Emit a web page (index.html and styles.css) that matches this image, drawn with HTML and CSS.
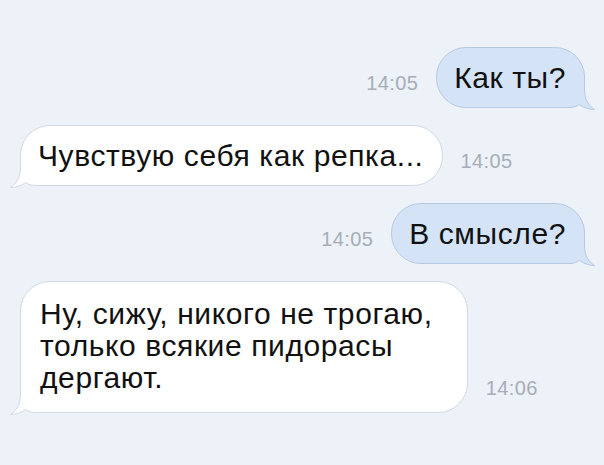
FILE: index.html
```html
<!DOCTYPE html>
<html lang="ru">
<head>
    <meta charset="UTF-8">
    <title>Переписка</title>
    <link rel="stylesheet" href="styles.css">
</head>
<body>
    <div class="chat">
        <div class="row out">
            <span class="time">14:05</span>
            <div class="bubble"><span class="text">Как ты?</span>
                <svg class="tail" width="44" height="36" viewBox="0 0 44 36"><path class="tail-fill" d="M10.5 0H44V33.5H26C22 33.5 18.5 32.5 15.5 30.5C11.5 33.5 6 35.5 0.5 35.5C6 32 10.5 26 10.5 16Z"/><path class="tail-line" d="M10.5 0V16C10.5 26 6 32 0.5 35.5C6 35.5 11.5 33.5 15.5 30.5C18.5 32.5 22 33.5 26 33.5H44"/></svg>
            </div>
        </div>

        <div class="row in">
            <div class="bubble"><span class="text">Чувствую себя как репка...</span>
                <svg class="tail" width="44" height="36" viewBox="0 0 44 36"><path class="tail-fill" d="M10.5 0H44V33.5H26C22 33.5 18.5 32.5 15.5 30.5C11.5 33.5 6 35.5 0.5 35.5C6 32 10.5 26 10.5 16Z"/><path class="tail-line" d="M10.5 0V16C10.5 26 6 32 0.5 35.5C6 35.5 11.5 33.5 15.5 30.5C18.5 32.5 22 33.5 26 33.5H44"/></svg>
            </div>
            <span class="time">14:05</span>
        </div>

        <div class="row out">
            <span class="time">14:05</span>
            <div class="bubble"><span class="text">В смысле?</span>
                <svg class="tail" width="44" height="36" viewBox="0 0 44 36"><path class="tail-fill" d="M10.5 0H44V33.5H26C22 33.5 18.5 32.5 15.5 30.5C11.5 33.5 6 35.5 0.5 35.5C6 32 10.5 26 10.5 16Z"/><path class="tail-line" d="M10.5 0V16C10.5 26 6 32 0.5 35.5C6 35.5 11.5 33.5 15.5 30.5C18.5 32.5 22 33.5 26 33.5H44"/></svg>
            </div>
        </div>

        <div class="row in">
            <div class="bubble long"><span class="text">Ну, сижу, никого не трогаю,<br>только всякие пидорасы<br>дергают.</span>
                <svg class="tail" width="44" height="36" viewBox="0 0 44 36"><path class="tail-fill" d="M10.5 0H44V33.5H26C22 33.5 18.5 32.5 15.5 30.5C11.5 33.5 6 35.5 0.5 35.5C6 32 10.5 26 10.5 16Z"/><path class="tail-line" d="M10.5 0V16C10.5 26 6 32 0.5 35.5C6 35.5 11.5 33.5 15.5 30.5C18.5 32.5 22 33.5 26 33.5H44"/></svg>
            </div>
            <span class="time">14:06</span>
        </div>
    </div>
</body>
</html>
```

FILE: styles.css
```css
/* Reset */
* {
    margin: 0;
    padding: 0;
    box-sizing: border-box;
}
body {
    font-family: "Liberation Sans", Arial, sans-serif;
    background-color: #edf1f8;
    color: #111;
    width: 604px;
    height: 465px;
    overflow: hidden;
}
.chat {
    display: flex;
    flex-direction: column;
    gap: 17px;
    padding: 47px 19px 0 20px;
}
.row {
    display: flex;
    align-items: flex-end;
    gap: 18px;
}
.row.out {
    justify-content: flex-end;
}
.bubble {
    position: relative;
    font-size: 30px;
    line-height: 32px;
    letter-spacing: 0.6px;
    padding: 14px 18px 13px 17px;
    border-radius: 30px;
    border: 1px solid #d3d9e2;
    background-color: #ffffff;
}
.bubble.long {
    padding-top: 16px;
    padding-left: 19px;
    padding-right: 34px;
    padding-bottom: 18px;
}
.bubble .text {
    position: relative;
    z-index: 1;
}
.out .bubble {
    background-color: #d4e3f6;
    border-color: #b7c9e2;
}
.time {
    font-size: 20px;
    letter-spacing: 0.4px;
    color: #a6adb8;
    margin-bottom: 13px;
}

/* Хвостик пузыря */
.tail {
    position: absolute;
    left: -11px;
    bottom: -3px;
    display: block;
}
.out .tail {
    left: auto;
    right: -11px;
    transform: scaleX(-1);
}
.tail-fill {
    fill: #ffffff;
}
.tail-line {
    fill: none;
    stroke: #d3d9e2;
    stroke-width: 1;
}
.out .tail-fill {
    fill: #d4e3f6;
}
.out .tail-line {
    stroke: #b7c9e2;
}
```
